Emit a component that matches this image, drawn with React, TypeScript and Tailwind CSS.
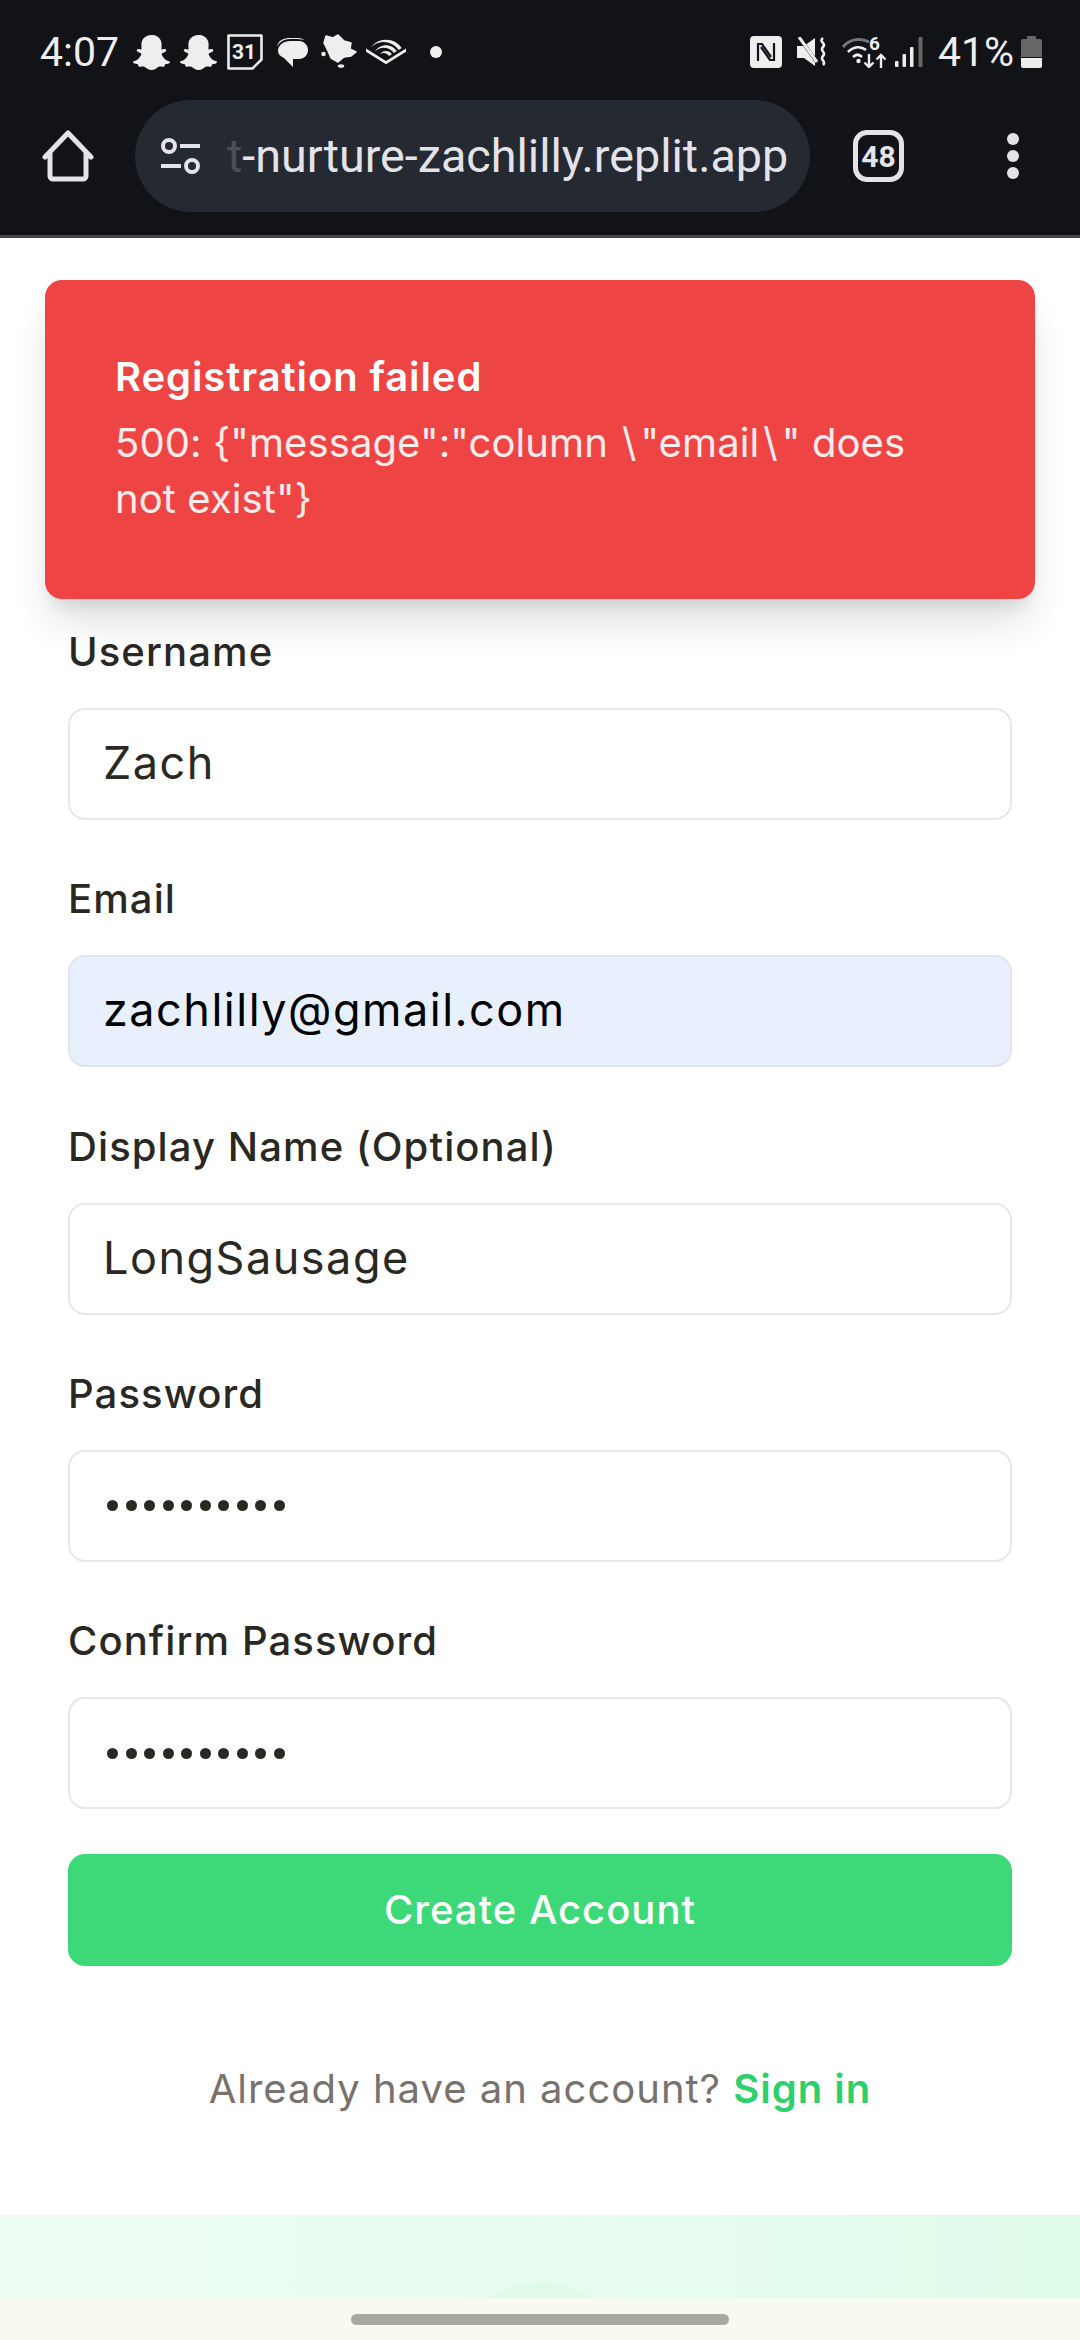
import { FaSnapchatGhost } from "react-icons/fa";
import { SiAudible } from "react-icons/si";

const sans = "font-['Inter','Liberation_Sans',sans-serif]";
const labelCls = `${sans} text-[40px] leading-[56px] font-medium text-[#292823] tracking-[1.1px]`;

function Field({ label, value, filled = false }: { label: string; value: string; filled?: boolean }) {
  return (
    <div className="flex flex-col gap-[28px]">
      <label className={labelCls}>{label}</label>
      <input
        readOnly
        type="text"
        value={value}
        className={`${sans} h-[112px] w-full rounded-[17px] border-2 px-[33px] pb-[3px] text-[45px] tracking-[1.5px] outline-none ${
          filled ? "border-[#dfe4ee] bg-[#e8f0fe] text-black" : "border-[#e8e7e2] bg-white text-[#292823]"
        }`}
      />
    </div>
  );
}

function PasswordField({ label }: { label: string }) {
  return (
    <div className="flex flex-col gap-[28px]">
      <label className={labelCls}>{label}</label>
      <div className="flex h-[112px] items-center rounded-[17px] border-2 border-[#e8e7e2] bg-white px-[37px]">
        <div className="flex gap-[7.5px]">
          {Array.from({ length: 10 }).map((_, i) => (
            <span key={i} className="h-[11px] w-[11px] rounded-full bg-[#292823]" />
          ))}
        </div>
      </div>
    </div>
  );
}

export default function App() {
  return (
    <div className="relative flex h-[2340px] w-[1080px] flex-col overflow-hidden bg-white">
      <header className="h-[238px] shrink-0 border-b-[3px] border-[#44464e] bg-[#121317] font-['Roboto',sans-serif]">
        <div className="flex h-[100px] items-start justify-between pl-[40px] pr-[38px] pt-[32px] text-[#eeeeee]">
          <div className="flex items-center">
            <span className="w-[93px] text-[41px] leading-[40px]">4:07</span>
            <FaSnapchatGhost className="h-[37px] w-[37px]" />
            <FaSnapchatGhost className="ml-[10px] h-[37px] w-[37px]" />
            <svg viewBox="0 0 36 36" className="ml-[10px] h-[36px] w-[36px]" fill="none">
              <path d="M1.5 1.5h33v24l-9 9h-24z" stroke="#eee" strokeWidth="2.6" strokeLinejoin="round" />
              <text x="17" y="25" textAnchor="middle" fontSize="21" fontWeight="700" fill="#eee" fontFamily="Roboto">31</text>
            </svg>
            <svg viewBox="0 0 33 31" className="ml-[13px] h-[31px] w-[33px]" fill="#eee">
              <path d="M2 14C2 8 8 4 14 4h9c5 0 9 4 9 9s-4 9-9 9h-6v8l-9-9C4 19 2 17 2 14z" />
              <path d="M1 10C2 3 8 1 14 1h8c3 0 5 1 6 2-3-1-6-1-8-1h-6C8 2 3 5 1 10z" />
            </svg>
            <svg viewBox="0 0 38 36" className="ml-[12px] h-[36px] w-[38px]" fill="#eee" stroke="#eee" strokeWidth="1.5" strokeLinejoin="round">
              <path d="M5 2l7 2 5-3 6 6 7 2-1 6 6 3-5 4-7 1-6 5-7-4-3-7-4-8z" />
              <circle cx="2.5" cy="20" r="1.5" />
              <ellipse cx="20" cy="32" rx="2.5" ry="1" />
            </svg>
            <SiAudible className="ml-[7px] h-[40px] w-[40px]" />
            <span className="ml-[24px] h-[12px] w-[12px] rounded-full bg-[#eeeeee]" />
          </div>
          <div className="flex items-center">
            <svg viewBox="0 0 32 32" className="h-[32px] w-[32px]" fill="none">
              <rect width="32" height="32" rx="4" fill="#eee" />
              <path d="M8 25V8h4l9 13M24 7v17h-4L11 11" stroke="#121317" strokeWidth="2.2" />
            </svg>
            <svg viewBox="0 0 30 30" className="ml-[15px] h-[30px] w-[30px]" fill="#eee">
              <path d="M0 9h7L18 1v28L7 21H0z" />
              <path d="M-1 -4L22 28" stroke="#121317" strokeWidth="3.5" />
              <path d="M2 0L20 25" stroke="#eee" strokeWidth="3" />
              <path d="M26 1c-5 4 4 5 0 9s4 5 0 9 4 5 0 9" stroke="#eee" strokeWidth="2.6" fill="none" />
            </svg>
            <svg viewBox="0 0 45 32" className="ml-[15px] h-[32px] w-[45px]" fill="none" stroke="#eee" strokeWidth="2.6">
              <path d="M1 11C8 2 20 2 27 6" stroke="#777" strokeWidth="3" />
              <path d="M6 16c6-6 13-6 18-2M11 21c3-3 6-3 9 0" />
              <circle cx="16.5" cy="25" r="2.2" fill="#eee" stroke="none" />
              <text x="27" y="14" fontSize="19" fontWeight="700" fill="#eee" stroke="none" fontFamily="Roboto">6</text>
              <path d="M27 18v13M22.5 26.5l4.5 4.5 4.5-4.5M39 32V19M34.5 23.5l4.5-4.5 4.5 4.5" strokeWidth="2.4" />
            </svg>
            <svg viewBox="0 0 28 30" className="ml-[8px] h-[30px] w-[28px]">
              <rect x="0" y="24" width="3.5" height="6" rx="1" fill="#eee" />
              <rect x="7.5" y="17" width="3.5" height="13" rx="1" fill="#eee" />
              <rect x="15" y="10" width="3.5" height="20" rx="1" fill="#eee" />
              <rect x="23.5" y="0" width="4" height="30" rx="1" fill="#666" />
            </svg>
            <span className="ml-[15px] w-[76px] text-[41px] leading-[40px] whitespace-nowrap">41%</span>
            <svg viewBox="0 0 21 32" className="ml-[7px] h-[32px] w-[21px]">
              <rect x="6" y="0" width="9" height="4" rx="1" fill="#666" />
              <path d="M2 3h17a2 2 0 0 1 2 2v16H0V5a2 2 0 0 1 2-2z" fill="#666" />
              <path d="M0 22h21v8a2 2 0 0 1-2 2H2a2 2 0 0 1-2-2z" fill="#eee" />
            </svg>
          </div>
        </div>
        <div className="flex h-[112px] items-center">
          <svg viewBox="0 0 52 52" className="ml-[42px] h-[52px] w-[52px]" fill="none" stroke="#e3e3e8" strokeWidth="5" strokeLinejoin="round" strokeLinecap="round">
            <path d="M3 27L26 3l23 24M8 22v24a3 3 0 0 0 3 3h30a3 3 0 0 0 3-3V22" />
          </svg>
          <div className="ml-[41px] flex h-[112px] w-[675px] items-center overflow-hidden rounded-full bg-[#252932]">
            <svg viewBox="0 0 42 36" className="ml-[25px] h-[36px] w-[42px] shrink-0" fill="none" stroke="#e3e3e8" strokeWidth="4">
              <circle cx="9" cy="8" r="6" />
              <path d="M20 8h20M1 28h20" />
              <circle cx="32" cy="28" r="6" />
            </svg>
            <span className="ml-[25px] whitespace-nowrap text-[46.7px] text-[#e3e3e8]">
              <span className="opacity-20">t</span>-nurture-zachlilly.replit.app
            </span>
          </div>
          <div className="ml-[43px] flex h-[52px] w-[51px] items-center justify-center rounded-[14px] border-[5px] border-[#e3e3e8] text-[30px] font-bold text-[#e3e3e8]">
            48
          </div>
          <div className="ml-[103px] flex flex-col gap-[5px]">
            <span className="h-[12px] w-[12px] rounded-full bg-[#e3e3e8]" />
            <span className="h-[12px] w-[12px] rounded-full bg-[#e3e3e8]" />
            <span className="h-[12px] w-[12px] rounded-full bg-[#e3e3e8]" />
          </div>
        </div>
      </header>

      <main className="flex shrink-0 flex-col gap-[51.25px] px-[68px] pt-[386px]">
        <Field label="Username" value="Zach" />
        <Field label="Email" value="zachlilly@gmail.com" filled />
        <Field label="Display Name (Optional)" value="LongSausage" />
        <PasswordField label="Password" />
        <PasswordField label="Confirm Password" />
        <button className={`${sans} -mt-[6px] h-[112px] rounded-[17px] bg-[#3dd978] text-[40px] font-medium tracking-[1px] text-white`}>
          Create Account
        </button>
      </main>

      <p className={`${sans} mt-[95px] text-center text-[40px] leading-[56px] tracking-[1px] text-[#78716c]`}>
        Already have an account? <span className="font-semibold text-[#2dd06c]">Sign in</span>
      </p>

      <div className="relative mt-[98px] flex-1 overflow-hidden bg-gradient-to-r from-[#effdf4] to-[#dffbea]">
        <div className="absolute left-[437px] top-[68px] h-[206px] w-[206px] rounded-full bg-[#dffbe8]" />
        <div className="absolute inset-x-0 bottom-0 flex h-[42px] justify-center bg-[#f6faef] pt-[16px]">
          <div className="h-[11px] w-[378px] rounded-full bg-[#a8aaa2]" />
        </div>
      </div>

      <div className="absolute left-[45px] top-[280px] h-[319px] w-[990px] rounded-[17px] bg-[#ef4444] px-[70px] pt-[69px] text-white shadow-[0_28px_40px_-8px_rgba(0,0,0,0.14),0_10px_16px_-6px_rgba(0,0,0,0.1)]">
        <div className={`${sans} text-[40px] font-semibold leading-[56px] tracking-[0.9px]`}>Registration failed</div>
        <div className={`${sans} mt-[10px] text-[40px] leading-[56px] tracking-[0.1px] text-white/90`}>
          500: {'{"message":"column'}
          <span className="ml-[14px] mr-[4px]">\</span>
          {'"email'}
          <span className="mx-[4px]">\</span>
          {'" does'}
          <br />
          {'not exist"}'}
        </div>
      </div>
    </div>
  );
}
